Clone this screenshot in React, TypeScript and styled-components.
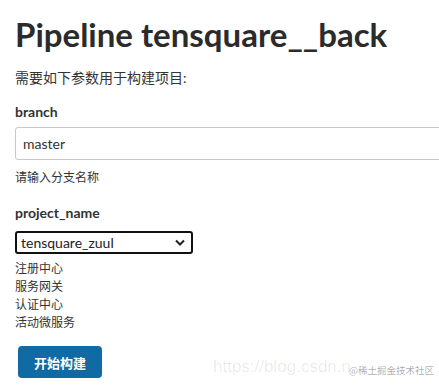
import styled, { createGlobalStyle } from "styled-components";

const GlobalStyle = createGlobalStyle`
  html, body {
    margin: 0;
    padding: 0;
    background: #fff;
  }
  body {
    font-family: Lato, "Noto Sans CJK SC", sans-serif;
    color: #333;
    overflow: hidden;
  }
`;

const Page = styled.div`
  position: relative;
  width: 439px;
  height: 391px;
  padding: 14px 0 0 15px;
  box-sizing: border-box;
  overflow: hidden;
`;

const Title = styled.h1`
  margin: 0;
  font-size: 33px;
  line-height: 40px;
  font-weight: 700;
  color: #2b2b2b;
  white-space: nowrap;
`;

const Intro = styled.p`
  margin: 15px 0 0;
  font-size: 14px;
  line-height: 18px;
`;

const Field = styled.div`
  margin-top: ${({ $top }: { $top: number }) => $top}px;
`;

const Label = styled.div`
  font-size: 14px;
  line-height: 18px;
  font-weight: 700;
  color: #333;
`;

const TextInput = styled.div`
  margin-top: 6px;
  width: 440px;
  height: 33px;
  box-sizing: border-box;
  border: 1px solid #c8c8c8;
  border-radius: 3px;
  padding: 0 7px;
  display: flex;
  align-items: center;
  font-size: 14px;
  color: #333;
`;

const Hint = styled.div`
  margin-top: 9px;
  font-size: 12px;
  line-height: 18px;
  color: #333;
`;

const Select = styled.div`
  margin-top: 9px;
  width: 178px;
  height: 23px;
  box-sizing: border-box;
  border: 2px solid #111;
  border-radius: 3px;
  padding: 0 6px 0 4px;
  display: flex;
  align-items: center;
  justify-content: space-between;
  font-size: 14px;
  color: #222;
`;

const Options = styled.ul`
  list-style: none;
  margin: 6px 0 0;
  padding: 0;
  font-size: 12px;
  line-height: 18px;
`;

const Button = styled.button`
  margin: 14px 0 0 3px;
  width: 84px;
  height: 32px;
  border: none;
  border-radius: 4px;
  background: #106aa3;
  color: #fff;
  font-family: "Noto Sans CJK SC", sans-serif;
  font-size: 13px;
  font-weight: 700;
`;

const Watermark = styled.div`
  position: absolute;
  left: 213px;
  top: 357px;
  font-family: "Liberation Sans", sans-serif;
  font-size: 17px;
  color: rgba(0, 0, 0, 0.09);
  white-space: nowrap;
`;

const Badge = styled.div`
  position: absolute;
  left: 349px;
  top: 363px;
  font-family: "Noto Sans CJK SC", sans-serif;
  font-size: 9.5px;
  color: rgba(0, 0, 0, 0.35);
  white-space: nowrap;
`;

const Chevron = () => (
  <svg width="10" height="7" viewBox="0 0 10 7">
    <path d="M1 1.5 L5 5.5 L9 1.5" fill="none" stroke="#222" strokeWidth="2" />
  </svg>
);

const App = () => {
  const services = ["注册中心", "服务网关", "认证中心", "活动微服务"];
  return (
    <>
      <GlobalStyle />
      <Page>
        <Title>Pipeline tensquare__back</Title>
        <Intro>需要如下参数用于构建项目:</Intro>
        <Field $top={16}>
          <Label>branch</Label>
          <TextInput>master</TextInput>
          <Hint>请输入分支名称</Hint>
        </Field>
        <Field $top={17}>
          <Label>project_name</Label>
          <Select>
            <span>tensquare_zuul</span>
            <Chevron />
          </Select>
          <Options>
            {services.map((s) => (
              <li key={s}>{s}</li>
            ))}
          </Options>
        </Field>
        <Button>开始构建</Button>
        <Watermark>https://blog.csdn.n</Watermark>
        <Badge>@稀土掘金技术社区</Badge>
      </Page>
    </>
  );
};

export default App;
